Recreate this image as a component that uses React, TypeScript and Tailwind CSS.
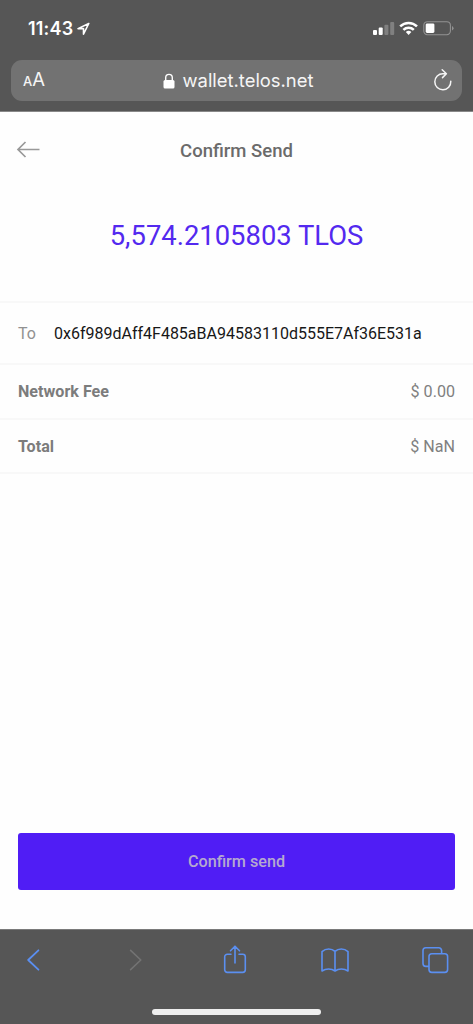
import React from "react";

function StatusBar() {
  return (
    <div className="flex h-[60px] items-start justify-between pl-[28px] pr-[19px] pt-[16px] text-white">
      <div className="flex items-center">
        <span className="font-['Inter',sans-serif] text-[18px] leading-[25px] font-semibold tracking-[0.2px]">
          11:43
        </span>
        <svg className="ml-[3px] h-[14px] w-[14px]" viewBox="0 0 14 14" fill="none" stroke="white" strokeWidth="1.6" strokeLinejoin="round">
          <path d="M12.800 1.500 2 6.600H7.500v5.600z" />
        </svg>
      </div>
      <svg className="mt-[4px] h-[16px] w-[82px]" viewBox="0 0 82 16" fill="none">
        <g fill="white">
          <rect x="1" y="10" width="4" height="5" rx="1" />
          <rect x="6.7" y="7.6" width="4" height="7.4" rx="1" />
          <rect x="12.4" y="4.8" width="4" height="10.2" rx="1" opacity=".25" />
          <rect x="18.2" y="2" width="4" height="13" rx="1" opacity=".25" />
        </g>
        <g stroke="white" strokeWidth="2.5">
          <path d="M28.2 6.4a12 12 0 0 1 16.8 0" />
          <path d="M31.4 9.9a7.4 7.4 0 0 1 10.4 0" />
        </g>
        <path d="M33.8 12.1a4 4 0 0 1 5.6 0l-2.8 2.8z" fill="white" />
        <rect x="51.8" y="1.7" width="26.6" height="13" rx="3.6" stroke="#929292" strokeWidth="1.1" />
        <rect x="53.7" y="3.4" width="8.7" height="9.5" rx="1.4" fill="white" />
        <path d="M80 6v4.6q1.6-.8 1.6-2.3T80 6z" fill="#929292" />
      </svg>
    </div>
  );
}

function AddressBar() {
  return (
    <div className="mx-[11px] flex h-[41px] items-center justify-between rounded-[11px] bg-[#727272] pl-[12px] pr-[9px] font-['Inter',sans-serif] text-[#f5f5f5]">
      <div className="flex w-[59px] items-baseline leading-[41px]">
        <span className="text-[13px] font-medium">A</span>
        <span className="text-[18.5px]">A</span>
      </div>
      <div className="flex items-center">
        <svg className="mr-[8px] ml-[1px] h-[16px] w-[12px]" viewBox="0 0 12 16" fill="none">
          <rect x=".5" y="7" width="11" height="8.5" rx="1.5" fill="white" />
          <path d="M2.7 7.5V4.7a3.3 3.3 0 0 1 6.6 0v2.8" stroke="white" strokeWidth="1.4" />
        </svg>
        <span className="text-[18.4px] leading-[41px]">wallet.telos.net</span>
      </div>
      <div className="flex w-[60px] justify-end">
        <svg className="mb-[2px] h-[24px] w-[20px]" viewBox="0 0 20 24" fill="none" stroke="#f5f5f5" strokeWidth="1.5" strokeLinecap="round" strokeLinejoin="round">
          <path d="M12.800 5.700H10A8 8 0 1 0 17.800 13.300M9.200 1.800l4.200 3.900-3.900 3.900" />
        </svg>
      </div>
    </div>
  );
}

function AmountRow({ label, value }: { label: string; value: string }) {
  return (
    <div className="flex items-center justify-between border-b-2 border-[#f8f8f8] px-[18px] pt-[2px] text-[16.1px] leading-[50.5px] text-[#7c7c7c]">
      <span className="font-bold">{label}</span>
      <span className="text-[#808080]">{value}</span>
    </div>
  );
}

function Toolbar() {
  return (
    <nav className="h-[95px] border-t border-[#7a7a7a] bg-[#565656]">
      <div className="flex h-[60px] items-center justify-between pl-[20px] pr-[24px]">
        <div className="flex w-[28px] justify-center pr-[2px]">
          <svg className="h-[24px] w-[13px]" viewBox="0 0 13 24" fill="none" stroke="#5b8ff0" strokeWidth="1.8" strokeLinecap="round" strokeLinejoin="round">
            <path d="M11.4 2.3 1.2 12l10.2 9.7" />
          </svg>
        </div>
        <div className="flex w-[28px] justify-center pl-[3px]">
          <svg className="h-[24px] w-[13px]" viewBox="0 0 13 24" fill="none" stroke="#737373" strokeWidth="1.6" strokeLinecap="round" strokeLinejoin="round">
            <path d="M1.6 2.3 11.8 12 1.6 21.7" />
          </svg>
        </div>
        <div className="flex w-[28px] justify-center">
          <svg className="h-[30px] w-[24px]" viewBox="0 0 24 30" fill="none" stroke="#5b8ff0" strokeWidth="1.6" strokeLinecap="round" strokeLinejoin="round">
            <path d="M8 9.2H4.3a2.6 2.6 0 0 0-2.6 2.6v13a2.6 2.6 0 0 0 2.6 2.6h15.4a2.6 2.6 0 0 0 2.6-2.6v-13a2.6 2.6 0 0 0-2.6-2.6H16M12 18V1.5M7.5 5.8 12 1.2l4.5 4.6" />
          </svg>
        </div>
        <div className="flex w-[28px] justify-center">
          <svg className="h-[26px] w-[28px]" viewBox="0 0 28 26" fill="none" stroke="#5b8ff0" strokeWidth="1.6" strokeLinecap="round" strokeLinejoin="round">
            <path d="M14 4.3Q11.5 2 7.7 2T1 4.7V24Q3.9 22 7.6 22T14 24V4.3Q16.5 2 20.3 2T27 4.7V24Q24.1 22 20.4 22T14 24" />
          </svg>
        </div>
        <div className="flex w-[28px] justify-center">
          <svg className="h-[28px] w-[28px]" viewBox="0 0 28 28" fill="none" stroke="#5b8ff0" strokeWidth="1.6" strokeLinejoin="round">
            <rect x="8" y="7.8" width="18.6" height="18.6" rx="2.8" />
            <path d="M8 20.4H4.8A2.8 2.8 0 0 1 2 17.6V4.6A2.8 2.8 0 0 1 4.8 1.8H17.8A2.8 2.8 0 0 1 20.6 4.6V7.8" />
          </svg>
        </div>
      </div>
      <div className="mx-auto mt-[19px] h-[6px] w-[169px] rounded-full bg-[#eeeeee]" />
    </nav>
  );
}

export default function App() {
  return (
    <div className="flex h-[1024px] w-[473px] flex-col overflow-hidden bg-[#fefefe] font-['Roboto',sans-serif]">
      <header className="h-[112px] shrink-0 border-b border-[#898989] bg-[#565656]">
        <StatusBar />
        <AddressBar />
      </header>
      <main className="flex flex-1 flex-col">
        <div className="grid h-[77px] grid-cols-[60px_1fr_60px] items-center">
          <svg className="mb-[2px] ml-[16px] h-[18px] w-[25px]" viewBox="0 0 25 18" fill="none" stroke="#999999" strokeWidth="1.7">
            <path d="M23.5 8.5H2M9.5 1 2 8.5 9.5 16" />
          </svg>
          <h1 className="pt-[2px] text-center text-[18.5px] font-medium text-[#6b6b6b]">Confirm Send</h1>
        </div>
        <div className="h-[114px] border-b-2 border-[#f8f8f8] pt-[29px] text-center text-[27.4px] leading-[36px] text-[#5329ef]">
          5,574.2105803 TLOS
        </div>
        <div className="flex h-[62px] items-center border-b-2 border-[#f8f8f8] px-[18px] pt-[1px] text-[16px]">
          <span className="w-[36px] text-[#919191]">To</span>
          <span className="text-[#171717]">0x6f989dAff4F485aBA94583110d555E7Af36E531a</span>
        </div>
        <AmountRow label="Network Fee" value="$ 0.00" />
        <AmountRow label="Total" value="$ NaN" />
        <button className="mx-[18px] mt-auto mb-[39px] h-[57px] rounded-[3px] bg-[#501df5] pt-[1px] text-[16.2px] font-medium text-[#b5a9cf]">
          Confirm send
        </button>
      </main>
      <Toolbar />
    </div>
  );
}
